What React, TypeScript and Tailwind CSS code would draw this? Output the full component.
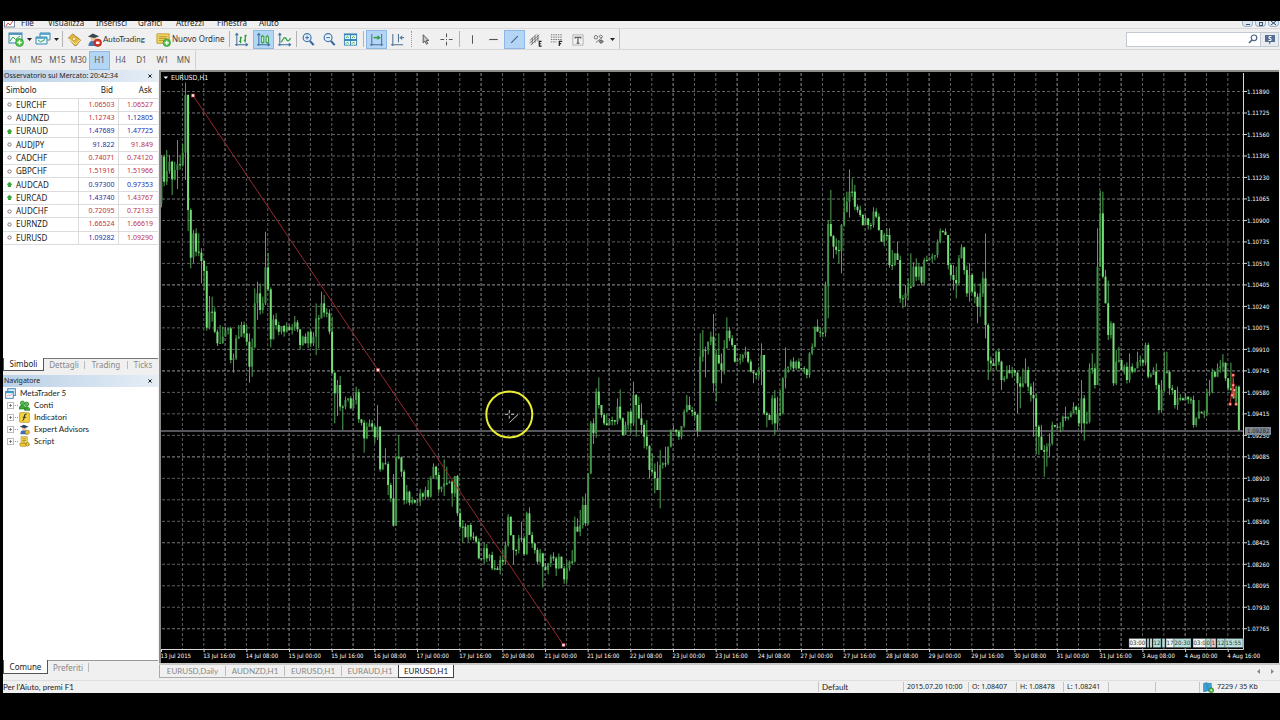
import React from "react";

/* ---------- price data ---------- */

type Bar = [close: number, high?: number, low?: number];
type Block = { base: number; bars: Bar[] };

/* Bars are stored in thirds of a chart unit below each block's base line. */
const blocks: Block[] = [
  {
    base: 70,
    bars: [
      [260, 255, 412], [335], [303, 240, 345], [275, 255], [328, 272, 375], [300, 275], [283, 210, 357], [285, 255],
      [248, 222, 290], [75, 38, 330], [420, 72, 483], [563, 415, 595], [490, 480, 580], [545, 475], [548, 490],
      [573, 535, 640], [603, 570, 660], [773, 588, 782], [725, 678, 778], [725, 680, 755], [785, 712, 790], [820],
      [819, 765, 822], [800, 770], [780], [775], [870, 770, 880], [865, 850, 908], [805, 795, 870], [800, 765],
      [765, 755], [790, 755], [815, 765], [890, 790, 938], [832, 805, 920], [700, 655], [670, 635, 750], [720, 640],
      [700, 680, 730], [592, 485, 705], [658, 548], [808, 652, 832], [748], [765, 730], [785], [768], [785, 765, 800],
      [770], [780], [772], [757, 738], [778], [825, 778, 840], [800], [820], [785], [820], [800], [745, 700, 855],
      [745, 735, 835], [700, 665], [728, 675], [730], [785, 718], [908, 740, 912],
    ],
  },
  {
    base: 350,
    bars: [
      [130, 70, 220], [105, 90, 198], [170, 78], [170, 165, 240], [150], [145], [175], [150], [127, 110], [208], [218],
      [265, 210, 308], [230], [220, 208], [230], [262, 225, 280], [230, 165], [358, 228, 365], [340], [342, 295],
      [405, 335, 435], [445], [527, 372, 530], [322, 318, 525], [322, 255], [365, 320, 380], [450], [425, 405], [458],
      [450], [458], [455], [430], [440], [420], [440, 390, 445], [385], [350, 340], [375], [418], [410], [400, 328, 438],
      [400, 350], [395], [430, 390, 470], [378], [490, 375], [530], [530, 510, 578], [562], [525], [560], [560], [575],
      [625], [628], [595, 578], [625], [615], [655], [655, 630], [660], [630], [635, 600], [585], [500, 492],
      [555, 500], [600, 565, 643], [600], [565], [565, 515], [612], [490, 485], [555, 472], [580], [600], [635], [610],
      [650, 608, 712], [660], [640], [620], [625], [655, 620, 678], [620], [655], [688], [655, 630, 700], [635],
      [635, 600], [530, 500], [545, 505], [525, 480], [465, 440], [520, 430], [370], [220], [250, 205, 282], [125, 115],
    ],
  },
  {
    base: 290,
    bars: [
      [345, 262], [375], [400, 370], [405, 370], [390], [390], [395], [350, 325], [385, 298], [435], [405], [365],
      [400, 360, 430], [315, 275], [345, 312, 440], [385, 320], [405, 340, 430], [440, 400, 475], [468, 390], [540, 465, 565],
      [545, 490], [565, 520, 610], [600, 515], [525, 480, 655], [520], [520, 470], [470], [425], [420], [425], [440, 420, 450],
      [408], [365], [345, 315], [360, 320], [365], [375], [422, 372, 440], [200, 130, 425], [180, 120, 215],
      [180, 170, 262], [155], [140, 125], [280, 72, 305], [195, 180, 335], [220, 130], [240, 190, 280], [175, 150],
      [122, 82, 175], [145, 112], [165], [215], [210], [205], [195], [185, 170], [215], [245], [250, 240, 280], [255],
      [240], [195, 160, 285], [370, 195], [375, 365, 412], [390], [325, 315], [400, 300, 435], [370, 320, 420], [370, 300],
      [265], [235, 172, 295], [230], [215], [235], [215], [235], [235], [238], [255, 235, 265], [190], [170], [110],
      [125, 88], [128], [128],
    ],
  },
  {
    base: 150,
    bars: [
      [405, 395, 560], [222, 210, 505], [258, 120], [290, 255, 325], [300, 265], [303, 270, 340], [225, 222, 370],
      [185, 140], [155, 125], [125, 58, 203], [125, 85], [170, 105], [180], [195], [225], [205], [225], [225], [185],
      [200, 175], [240], [275], [255], [255, 235], [345, 235], [345, 300, 360], [310], [330, 275], [445], [445, 435, 475],
      [430, 405, 470], [410, 385, 450], [410, 310], [350], [380, 325], [350], [398], [330], [330], [325], [320], [315],
      [275], [243, 235], [245], [255], [345], [375], [390, 345, 420], [400, 350, 445], [325], [292, 283], [360, 290],
      [430], [375, 340, 455], [425, 370], [440, 400, 460], [470, 430, 520], [430, 400, 500], [385, 365], [525, 250, 565],
      [632, 520, 690], [640, 620, 665], [648], [605], [635], [690, 632, 720], [685], [660], [670, 645], [660], [668],
      [700, 665, 790], [710, 680, 775], [700, 655], [660, 625], [710, 650], [735, 700, 755], [745, 695, 860],
      [830, 730, 912], [860, 825, 915], [900, 825], [905, 885, 980], [890, 880, 950], [880, 850, 920], [825], [830],
      [832], [830], [800], [805, 770], [800], [790], [770], [780], [820], [745, 690, 850], [820, 735, 872], [815, 785],
      [655, 640, 820], [655, 610], [705, 640],
    ],
  },
  {
    base: 70,
    bars: [
      [590, 475, 945], [430, 362, 590], [620, 365, 625], [700, 600], [795, 632, 810], [760], [940, 758], [875, 840],
      [870, 830], [900], [890], [930], [890, 850], [905], [895], [875, 845], [870], [878], [825, 818], [920, 818],
      [915], [905], [945, 880], [1020, 940, 1030], [960, 930], [905, 845], [905, 845], [955, 905, 975], [960], [1005],
      [985, 950, 1020], [985], [990], [980], [988], [990], [1065], [1045], [1025, 990], [1030], [1028], [970], [965, 930],
      [905], [920], [895, 880], [890, 870], [878, 852], [925, 880], [955], [960, 878], [985, 925], [950], [1080, 946, 1083],
    ],
  },
];

type Candle = { x: number; top: number; bottom: number; high: number; low: number; up: boolean };

const candles: Candle[] = [];
{
  let prev = 70 + 400 / 3;
  let i = 0;
  for (const block of blocks) {
    for (const [c, h, l] of block.bars) {
      const close = block.base + c / 3;
      const top = Math.min(prev, close);
      const bottom = Math.max(prev, close, top + 1);
      const high = h === undefined ? top - ((i * 7) % 5) * 1.1 : Math.min(top, block.base + h / 3);
      const low = l === undefined ? bottom + ((i * 11) % 6) * 0.9 : Math.max(bottom, block.base + l / 3);
      candles.push({ x: 161.4 + i * 2.667, top, bottom, high, low, up: close < prev });
      prev = close;
      i++;
    }
  }
}

const dates = [
  "13 Jul 2015", "13 Jul 16:00", "14 Jul 08:00", "15 Jul 00:00", "15 Jul 16:00", "16 Jul 08:00", "17 Jul 00:00",
  "17 Jul 16:00", "20 Jul 08:00", "21 Jul 00:00", "21 Jul 16:00", "22 Jul 08:00", "23 Jul 00:00", "23 Jul 16:00",
  "24 Jul 08:00", "27 Jul 00:00", "27 Jul 16:00", "28 Jul 08:00", "29 Jul 00:00", "29 Jul 16:00", "30 Jul 08:00",
  "31 Jul 00:00", "31 Jul 16:00", "3 Aug 08:00", "4 Aug 00:00", "4 Aug 16:00",
];
const columns = Array.from({ length: 50 }, (_, k) => 182.4 + k * 21.335);
const levels = Array.from({ length: 26 }, (_, k) => ({ y: 91.5 + k * 21.49, label: (1.1189 - k * 0.00165).toFixed(5) }));

const events: { x: number; w: number; t: string; fill: string }[] = [
  { x: 1129, w: 17, t: "03:00", fill: "#f4f4f4" },
  { x: 1147, w: 2, t: "", fill: "#b9dedb" },
  { x: 1150, w: 2, t: "", fill: "#f4f4f4" },
  { x: 1153, w: 8, t: "12", fill: "#b9dedb" },
  { x: 1162, w: 3, t: "", fill: "#b9dedb" },
  { x: 1166, w: 8, t: "17", fill: "#f4f4f4" },
  { x: 1174, w: 17, t: "20:30", fill: "#b9dedb" },
  { x: 1193, w: 13, t: "03:0", fill: "#f4f4f4" },
  { x: 1206, w: 5, t: "0", fill: "#b9dedb" },
  { x: 1211, w: 5, t: "1", fill: "#f0c4c8" },
  { x: 1217, w: 8, t: "12", fill: "#b9dedb" },
  { x: 1225, w: 18, t: "15:55", fill: "#b9dedb" },
];

const marks: [number, number][] = [[1233, 375], [1233, 385], [1234, 390], [1232, 395], [1230, 404], [1236, 404]];

function Chart() {
  return (
    <svg
      viewBox="161 72 1118 590"
      preserveAspectRatio="xMinYMin meet"
      className="block h-full w-full font-['DejaVu_Sans_Condensed','Noto_Sans',sans-serif] text-[6px]"
      role="img"
      aria-label="EURUSD,H1"
    >
      <g stroke="#8b8d90" strokeWidth="1" strokeDasharray="3 2" opacity="0.85">
        {columns.map((x, k) => <line key={k} x1={x} x2={x} y1="73" y2="649" strokeWidth={k % 3 === 2 ? 1.2 : 0.8} />)}
        {levels.map((l, k) => <line key={k} x1="162" x2="1243" y1={l.y} y2={l.y} strokeWidth={k % 4 === 1 ? 1.1 : 0.8} />)}
      </g>
      <rect x="161" y="430" width="1083" height="2" fill="#55555b" />
      {candles.map((c, k) => (
        <g key={k} fill={c.up ? "#419247" : "#76dd78"}>
          <rect x={c.x - 0.4} y={c.high} width="0.9" height={c.low - c.high} fill="#58b45c" />
          <rect x={c.x - 1} y={c.top} width="2" height={c.bottom - c.top} />
        </g>
      ))}
      <path d="M193 95.5 378 370 563.5 645" stroke="#98282d" strokeWidth="1" fill="none" />
      {[[193, 95.5], [378, 370], [563.5, 645]].map(([x, y]) => (
        <rect key={x} x={x - 1.5} y={y - 1.5} width="3" height="3" fill="#ffe9e9" stroke="#b33" strokeWidth="0.6" />
      ))}
      <path d="M1233 375V385L1236 404M1233 385 1230 404M1234 390 1232 395" stroke="#c33b2b" strokeWidth="1" fill="none" />
      {marks.map(([x, y]) => (
        <rect key={`${x}-${y}`} x={x - 1} y={y - 1} width="2.2" height="2.2" fill="#fff" stroke="#d22" strokeWidth="0.8" />
      ))}
      <path d="M161 649.5H1243.5V73" stroke="#d8d8d8" strokeWidth="1" fill="none" />
      {dates.map((d, k) => (
        <g key={k}>
          <path d={`M${161.5 + k * 42.67} 649v3`} stroke="#d8d8d8" />
          <text x={160.5 + k * 42.67} y="657.6" fill="#fff">{d}</text>
        </g>
      ))}
      {levels.map((l) => (
        <g key={l.label}>
          <path d={`M1244 ${l.y}h3`} stroke="#d8d8d8" />
          <text x="1247" y={l.y + 2.3} fill="#fff">{l.label}</text>
        </g>
      ))}
      <rect x="1245" y="427" width="26" height="8" fill="#7f8994" />
      <text x="1247" y="433.2" fill="#20262c">1.09282</text>
      {events.map((e) => (
        <g key={e.x}>
          <rect x={e.x} y="638.5" width={e.w} height="9" fill={e.fill} stroke="#3c4c4c" strokeWidth="0.5" />
          <text x={e.x + 0.6} y="645.4" fill="#1d3432">{e.t}</text>
        </g>
      ))}
      <path d="M163.5 76.5h4.6l-2.3 2.6z" fill="#fff" />
      <text x="171" y="80" fill="#f2f2f2" className="text-[7px]">EURUSD,H1</text>
      <circle cx="509.3" cy="414.5" r="23" fill="none" stroke="#e9ee33" strokeWidth="2" />
      <path d="M505 414.3h3M511 414.3h3M509.3 410v3M509.3 415.6v3M509.5 422.5 518 414.5" stroke="#ddd" strokeWidth="0.9" fill="none" />
    </svg>
  );
}

/* ---------- icons ---------- */

function Ico({ children, w = 15 }: { children: React.ReactNode; w?: number }) {
  return (
    <svg viewBox="0 0 16 16" width={w} height={w} fill="none" className="shrink-0" aria-hidden="true">
      {children}
    </svg>
  );
}

const Plus = () => (
  <g>
    <circle cx="11.5" cy="11.5" r="4" fill="#4cc046" stroke="#2f8f35" strokeWidth="0.6" />
    <path d="M11.5 9.2v4.6M9.2 11.5h4.6" stroke="#fff" strokeWidth="1.4" />
  </g>
);

const Axes = () => (
  <path d="M3 2v13M1 13.500h13M12.500 12l2 1.500-2 1.500M1.500 3.500 3 1.500l1.500 2" stroke="#3f6f9f" strokeWidth="1.100" />
);

const icons = {
  newChart: <Ico w={16}><rect x="1" y="2" width="13" height="10" fill="#eefaf3" stroke="#3b84b4" /><path d="M1 3h13" stroke="#3b84b4" strokeWidth="1.600" /><path d="M2 10 5 6l2.500 2.500L12 5" stroke="#35a04c" /><Plus /></Ico>,
  profiles: <Ico w={16}><path d="M5 2h10v7H5z" fill="#eefaf3" stroke="#3b84b4" /><path d="M1 6h11v7H1z" fill="#e6f6fb" stroke="#3b84b4" /><path d="M1 7h11M5 3h10" stroke="#3b9cc4" strokeWidth="1.400" /><path d="m3 9 2.500 2L10 8.500" stroke="#35a04c" /></Ico>,
  book: <Ico><path d="M1.500 6.500 6 2l8.500 6.500L10 14.500H8z" fill="#e2b63b" stroke="#9b731d" strokeWidth="0.800" /><path d="m2 7.500 7 5.500 5-4.500" stroke="#fff0bb" /><circle cx="7.500" cy="7.500" r="1.800" fill="#fff2c5" stroke="#b58a24" strokeWidth=".6" /></Ico>,
  auto: <Ico><path d="M1.500 15c0-4 2-6 5.500-6s5.500 2 5.500 6z" fill="#4a79b0" /><circle cx="7" cy="6.500" r="3" fill="#e9c796" /><path d="M1 5 6 1.500 13 4.500 8 6.500z" fill="#3b4654" /><circle cx="11.500" cy="11.500" r="4" fill="#d9362a" stroke="#9d1a12" strokeWidth="0.600" /><rect x="9.700" y="10.200" width="3.600" height="2.600" fill="#fff" /></Ico>,
  order: <Ico><path d="M1 2h13v10H1z" fill="#f2d768" stroke="#c19b2c" /><path d="M3 5h9M3 7h9M3 9h6" stroke="#a8821b" strokeWidth="0.800" /><Plus /></Ico>,
  bars: <Ico><Axes /><path d="M7 5v7M5.500 10H7M7 6h1.500M12 3v8M10.500 9H12M12 4h1.500" stroke="#2f9c3c" strokeWidth="1.400" /></Ico>,
  candle: <Ico><Axes /><path d="M7 3v9.500M12 3v9.500" stroke="#2f9c3c" /><rect x="5.700" y="4.500" width="2.600" height="6.500" fill="#c9f4c6" stroke="#2f9c3c" /><rect x="10.700" y="5" width="2.600" height="6" fill="#c9f4c6" stroke="#2f9c3c" /></Ico>,
  line: <Ico><Axes /><path d="M4 10.500c2 0 2.500-5 4.500-4.500s1.500 3.500 3 3.500 2-1.500 3-3" stroke="#2f9c3c" strokeWidth="1.300" /></Ico>,
  zoomIn: <Ico><circle cx="6.500" cy="6" r="4.200" fill="#e6f1fb" stroke="#4477ae" strokeWidth="1.300" /><path d="M4.500 6h4M6.500 4v4" stroke="#2f66a6" /><path d="m9.500 9.500 4 4.500" stroke="#2f66a6" strokeWidth="2.200" /></Ico>,
  zoomOut: <Ico><circle cx="6.500" cy="6" r="4.200" fill="#e6f1fb" stroke="#4477ae" strokeWidth="1.300" /><path d="M4.500 6h4" stroke="#2f66a6" /><path d="m9.500 9.500 4 4.500" stroke="#2f66a6" strokeWidth="2.200" /></Ico>,
  tile: <Ico><rect x="1" y="1.500" width="14" height="13" fill="#3a86bd" /><path d="M2 3.500h5.500v4H2zM8.500 3.500H14v4H8.500zM2 9.500h5.500v4H2zM8.500 9.500H14v4H8.500z" fill="#eaf9ec" /><path d="m3 6.500 1.500-1.500L6 6M9.500 6.500 11 5l1.500 1M3 12.500 4.500 11 6 12M9.500 12.500 11 11l1.500 1" stroke="#2f9c3c" /></Ico>,
  scroll: <Ico><path d="M3 2v13M1 13.500h14M13.500 2v13" stroke="#4d6f94" strokeWidth="1.100" /><path d="M5 6h5" stroke="#2f9c3c" strokeWidth="1.600" /><path d="m9 3.500 3.500 2.500L9 8.500z" fill="#2f9c3c" /></Ico>,
  shift: <Ico><path d="M3 2v13M1 13.500h13M9 2v9" stroke="#4d6f94" strokeWidth="1.100" /><path d="M15 6h-3" stroke="#35608c" /><path d="m13 3.500-3 2.500 3 2.500z" fill="#4d7fb4" /></Ico>,
  cursor: <Ico><path d="M5.500 3v8.500l2-1.800 1.500 3.300 1.500-.8-1.600-3 2.600-.3z" fill="#c8c8c8" stroke="#444" strokeWidth="0.900" /></Ico>,
  cross: <Ico><path d="M8 1.500v4M8 10.500v4M1.500 8h4M10.500 8h4" stroke="#555" strokeWidth="1.100" /><path d="M7.500 8h1" stroke="#444" /></Ico>,
  vline: <Ico><path d="M8 3.500v9" stroke="#555" strokeWidth="1.100" /></Ico>,
  hline: <Ico><path d="M3.500 8h9" stroke="#555" strokeWidth="1.200" /></Ico>,
  trend: <Ico><path d="m4.500 11.500 7-7" stroke="#4b6078" strokeWidth="1.200" /></Ico>,
  channel: <Ico><path d="m2 9 7-6.500M3 14l9-8.500M1.500 12 12 3M4.500 6v7M7.500 4.500v7M10.500 3v7" stroke="#666" strokeWidth=".9" /><path d="M14.500 10H12v5h2.500M12 12.500h2" stroke="#222" strokeWidth="1.200" /></Ico>,
  fibo: <Ico><path d="M2 3h12M2 5.500h12M2 8h12M2 10.500h6" stroke="#666" strokeDasharray="1.500 1" /><path d="M11 15v-5h3M11 12.500h2" stroke="#222" strokeWidth="1.300" /></Ico>,
  text: <Ico><rect x="3" y="3" width="11" height="11" stroke="#777" strokeDasharray="1 1" /><path d="M5.500 5.500h6M8.500 5.500V12M7 12h3M5.500 5v2M11.500 5v2" stroke="#444" strokeWidth="1.100" /></Ico>,
  shapes: <Ico w={14}><circle cx="4.500" cy="6" r="2" stroke="#666" /><path d="m8 5 2-1.500L12 5l-2 2zM4.500 12 12 6" stroke="#666" /><path d="M8 10.500 11 9l2 2-3 2z" fill="#888" stroke="#555" /></Ico>,
};

/* ---------- toolbar ---------- */

const Sep = ({ wide = false }: { wide?: boolean }) => (
  <span className={wide ? "mx-0.5 h-4 w-px shrink-0 bg-[#b4b4b4]" : "mx-px h-4 w-px shrink-0 bg-[#b4b4b4]"} />
);

function Tool({ icon, label, on = false }: { icon: React.ReactNode; label: string; on?: boolean }) {
  return (
    <button
      aria-label={label}
      className={
        on
          ? "flex h-[19px] w-[21px] shrink-0 items-center justify-center border border-[#8db8e4] bg-[#b4d6f6]"
          : "flex h-[19px] w-[21px] shrink-0 items-center justify-center"
      }
    >
      {icon}
    </button>
  );
}

function Drop({ label }: { label: string }) {
  return (
    <button aria-label={label} className="flex h-4 w-1.5 shrink-0 items-center justify-center">
      <svg width="5" height="3" viewBox="0 0 5 3"><path d="M0 0h5L2.500 3z" fill="#222" /></svg>
    </button>
  );
}

function Toolbar() {
  return (
    <div className="flex h-[22px] shrink-0 items-center border-y border-[#d8d8d8]">
      <div className="flex h-full items-center">
        <div className="flex w-[58px] items-center pl-[2px]">
          <Tool icon={icons.newChart} label="Nuovo grafico" />
          <Drop label="Elenco grafici" />
          <Tool icon={icons.profiles} label="Profili" />
          <Drop label="Elenco profili" />
        </div>
        <Sep />
        <Tool icon={icons.book} label="Simboli" />
        <button className="flex w-[67px] shrink-0 items-center gap-px whitespace-nowrap pl-0.5 font-['Lato','Noto_Sans',sans-serif]">{icons.auto}AutoTrading</button>
        <button className="flex w-[72px] shrink-0 items-center gap-px whitespace-nowrap pl-1">{icons.order}Nuovo Ordine</button>
        <span className="w-1" />
        <Sep />
        <Tool icon={icons.bars} label="Barre" />
        <span className="w-px" />
        <Tool icon={icons.candle} label="Candele" on />
        <Tool icon={icons.line} label="Linea" />
        <Sep />
        <Tool icon={icons.zoomIn} label="Ingrandisci" />
        <Tool icon={icons.zoomOut} label="Riduci" />
        <Tool icon={icons.tile} label="Affianca" />
        <Sep wide />
        <Tool icon={icons.scroll} label="Scorrimento" on />
        <Tool icon={icons.shift} label="Spostamento" />
      </div>
      <span className="ml-[3px] mr-[3px] h-4 border-l border-dotted border-[#999]" />
      <div className="flex h-full items-center border-r border-[#c4c4c4]">
        <Tool icon={icons.cursor} label="Cursore" />
        <Tool icon={icons.cross} label="Mirino" />
        <Sep wide />
        <Tool icon={icons.vline} label="Linea verticale" />
        <Tool icon={icons.hline} label="Linea orizzontale" />
        <Tool icon={icons.trend} label="Linea di tendenza" on />
        <Tool icon={icons.channel} label="Canale" />
        <Tool icon={icons.fibo} label="Fibonacci" />
        <Tool icon={icons.text} label="Testo" />
        <Tool icon={icons.shapes} label="Oggetti" />
        <Drop label="Elenco oggetti" />
        <span className="w-1" />
      </div>
      <div className="ml-auto mr-px flex h-[15px] items-center border border-[#c2c8d0] bg-white">
        <input aria-label="Cerca" className="h-full w-[118px] bg-white px-1 outline-none" />
        <button aria-label="Avvia ricerca" className="flex w-[15px] items-center justify-center">
          <svg width="10" height="10" viewBox="0 0 10 10" fill="none"><circle cx="6" cy="3.800" r="2.800" stroke="#4a6286" strokeWidth="1.200" /><path d="M4 6 1 9" stroke="#4a6286" strokeWidth="1.600" /></svg>
        </button>
        <button aria-label="Messaggi" className="flex h-full w-[18px] items-center justify-center border-l border-[#c2c8d0] bg-[#e8ebef]">
          <svg width="12" height="11" viewBox="0 0 12 11"><path d="M1 1h10v7H7l-2 2.500V8H1z" fill="#556c94" /><path d="M7.500 2.500H5v2h2v2H4.500" stroke="#fff" fill="none" /></svg>
        </button>
      </div>
    </div>
  );
}

/* ---------- left panels ---------- */

type Quote = [symbol: string, bid: string, ask: string, bidUp: boolean, askUp: boolean, up?: boolean];
const quotes: Quote[] = [
  ["EURCHF", "1.06503", "1.06527", false, false],
  ["AUDNZD", "1.12743", "1.12805", false, true],
  ["EURAUD", "1.47689", "1.47725", true, true, true],
  ["AUDJPY", "91.822", "91.849", true, false],
  ["CADCHF", "0.74071", "0.74120", false, false],
  ["GBPCHF", "1.51916", "1.51966", false, false],
  ["AUDCAD", "0.97300", "0.97353", true, true, true],
  ["EURCAD", "1.43740", "1.43767", true, false, true],
  ["AUDCHF", "0.72095", "0.72133", false, false],
  ["EURNZD", "1.66524", "1.66619", false, false],
  ["EURUSD", "1.09282", "1.09290", true, false],
];

function PanelTitle({ children }: { children: React.ReactNode }) {
  return (
    <div className="flex h-3 shrink-0 items-center justify-between bg-gradient-to-r from-[#b9d0e6] to-[#e6eef6] pl-px pr-1 text-[#222]">
      <h2 className="whitespace-nowrap text-[7px]">{children}</h2>
      <button aria-label="Chiudi" className="flex h-2 w-2 items-center justify-center">
        <svg width="4" height="4" viewBox="0 0 5 5"><path d="m.5.500 4 4M4.500.500l-4 4" stroke="#111" strokeWidth="1.200" /></svg>
      </button>
    </div>
  );
}

function MarketWatch() {
  return (
    <section className="flex h-[301px] shrink-0 flex-col bg-white">
      <PanelTitle>Osservatorio sul Mercato: 20:42:34</PanelTitle>
      <table className="h-[163px] w-full table-fixed border-collapse">
        <thead>
          <tr className="h-4 text-[#222]">
            <th className="w-[75px] pl-[3px] text-left font-normal">Simbolo</th>
            <th className="pr-[5px] text-right font-normal">Bid</th>
            <th className="pr-1.5 text-right font-normal">Ask</th>
          </tr>
        </thead>
        <tbody>
          {quotes.map(([s, bid, ask, bu, au, up]) => (
            <tr key={s} className="border-y border-[#dcdcdc]">
              <td className="p-0 pl-1 text-[#222]">
                <span className="flex items-center gap-1">
                  <svg width="5" height="5" viewBox="0 0 6 6" className="shrink-0">
                    {up ? <path d="M3 0 6 3H4.500v3h-3V3H0z" fill="#2cab2c" stroke="#16801a" strokeWidth="0.5" /> : <circle cx="3" cy="3" r="2" fill="#fff" stroke="#8a6f6f" strokeWidth="1.200" />}
                  </svg>
                  {s}
                </span>
              </td>
              <td className={bu ? "border-x border-[#dcdcdc] p-0 pr-[3px] text-right text-[7px] text-[#2a2aa6]" : "border-x border-[#dcdcdc] p-0 pr-[3px] text-right text-[7px] text-[#bf2f3c]"}>{bid}</td>
              <td className={au ? "p-0 pr-[5px] text-right text-[7px] text-[#2a2aa6]" : "p-0 pr-[5px] text-right text-[7px] text-[#bf2f3c]"}>{ask}</td>
            </tr>
          ))}
        </tbody>
      </table>
      <div className="mt-auto flex h-[13px] shrink-0 border-t border-[#777] bg-[#f0f0f0] text-[#888]">
        <button className="-mt-px h-[13px] w-[41px] border-x border-b border-[#555] bg-white text-[#222]">Simboli</button>
        <button className="my-0.5 w-[41px] border-r border-[#bbb] leading-none">Dettagli</button>
        <button className="my-0.5 w-[43px] border-r border-[#bbb] leading-none">Trading</button>
        <button className="my-0.5 w-[30px] leading-none">Ticks</button>
      </div>
    </section>
  );
}

const treeIcons = {
  root: <Ico w={11}><rect x="4" y="1" width="11" height="10" fill="#dff1fb" stroke="#3b84b4" strokeWidth="1.400" /><rect x="1" y="5" width="11" height="10" fill="#fff" stroke="#3b84b4" strokeWidth="1.400" /><path d="M1 6.500h11" stroke="#3b9cc4" strokeWidth="2" /><path d="m3 12 2-2 2 1.500 3-3" stroke="#d2554b" /></Ico>,
  accounts: <Ico w={11}><circle cx="5" cy="4.500" r="3" fill="#58c24a" stroke="#217f2a" /><circle cx="11" cy="6" r="3" fill="#58c24a" stroke="#217f2a" /><path d="M0 13c0-7 9-7 10 0zM8 15c0-7 7-7 8 0z" fill="#3fa836" stroke="#217f2a" /></Ico>,
  indicators: <Ico w={11}><rect x="1" y="1" width="14" height="14" rx="1" fill="#f5d542" stroke="#ad8615" /><path d="M11 3.500C8 3 8 5 7.500 8S7 12.500 5 12.500M5.500 7.500h5" stroke="#333" strokeWidth="1.500" /></Ico>,
  experts: <Ico w={11}><path d="M2 15c0-5 2-6 5-6s6 1 6 6z" fill="#3e6fa8" /><circle cx="7.500" cy="6.500" r="3" fill="#e9c796" /><path d="M1 4 7 1l7 3-6 2z" fill="#26435f" /><circle cx="12" cy="12" r="3" fill="#e9c33c" stroke="#8d6b14" /></Ico>,
  script: <Ico w={11}><path d="M3 1h9v11H3z" fill="#f7dc62" stroke="#b18c1c" /><path d="M5 4h5M5 6.500h5M5 9h4" stroke="#8d6b14" /><path d="M1 11h9v4H2z" fill="#f3cb3c" stroke="#b18c1c" /><circle cx="12.500" cy="12" r="2.500" fill="#f3cb3c" stroke="#8d6b14" /></Ico>,
};

function TreeItem({ icon, children }: { icon: React.ReactNode; children: React.ReactNode }) {
  return (
    <li className="flex h-3 items-center gap-1 pl-1">
      <span className="flex items-center gap-px">
        <button aria-label="Espandi" className="flex">
          <svg width="7" height="7" viewBox="0 0 7 7" fill="none"><rect x=".5" y=".5" width="6" height="6" fill="#fff" stroke="#bbb" /><path d="M2 3.500h3M3.500 2v3" stroke="#666" strokeWidth=".8" /></svg>
        </button>
        <span className="w-[3px] border-t border-dotted border-[#999]" />
        {icon}
      </span>
      {children}
    </li>
  );
}

function Navigator() {
  return (
    <section className="mt-1 flex min-h-0 flex-1 flex-col bg-white">
      <PanelTitle>Navigatore</PanelTitle>
      <div className="font-['Lato','Noto_Sans',sans-serif] text-[#222]">
        <div className="flex h-3 items-center gap-1 pl-0.5">{treeIcons.root}MetaTrader 5</div>
        <ul>
          <TreeItem icon={treeIcons.accounts}>Conti</TreeItem>
          <TreeItem icon={treeIcons.indicators}>Indicatori</TreeItem>
          <TreeItem icon={treeIcons.experts}>Expert Advisors</TreeItem>
          <TreeItem icon={treeIcons.script}>Script</TreeItem>
        </ul>
      </div>
      <div className="mt-auto flex h-[14px] shrink-0 border-t border-[#999] bg-[#f0f0f0] text-[#888]">
        <button className="-mt-px h-[14px] w-[45px] border-x border-b border-[#555] bg-white text-[#222]">Comune</button>
        <button className="my-0.5 w-[41px] border-r border-[#bbb] leading-none">Preferiti</button>
      </div>
    </section>
  );
}

/* ---------- page ---------- */

const menus = [
  ["File", "w-[27px]"], ["Visualizza", "w-12"], ["Inserisci", "w-[42px]"], ["Grafici", "w-[38px]"],
  ["Attrezzi", "w-[41px]"], ["Finestra", "w-[42px]"], ["Aiuto", "w-8"],
];
const frames = ["M1", "M5", "M15", "M30", "H1", "H4", "D1", "W1", "MN"];

export default function App() {
  return (
    <div className="flex h-screen min-h-[480px] flex-col overflow-hidden bg-black pb-[27px] pl-[3px] pt-[21px] font-['Noto_Sans','Open_Sans',sans-serif] text-[8px] leading-[10px] text-[#333]">
      <div className="flex min-h-0 flex-1 flex-col bg-[#f0f0f0]">
        <header className="flex h-[7px] shrink-0 items-end overflow-hidden">
          <svg width="11" height="7" viewBox="0 0 11 7" className="ml-px mr-[6px]"><rect x=".5" y="-3" width="10" height="9" fill="#fff" stroke="#7a8ba0" /><path d="m2 5 2-3 2 2 3-4" stroke="#c44" fill="none" /></svg>
          <nav className="flex h-[10px] items-center text-[#222]">
            {menus.map(([m, w]) => <button key={m} className={`${w} text-left`}>{m}</button>)}
          </nav>
          <div className="ml-auto mr-px flex gap-0.5 self-start">
            <button aria-label="Riduci a icona" className="h-[6px] w-[11px] rounded-b-sm border border-t-0 border-[#9db2ca] bg-[#dce8f4]"><span className="mx-auto mt-0.5 block h-px w-1 bg-[#456]" /></button>
            <button aria-label="Ripristina" className="h-[6px] w-[11px] rounded-b-sm border border-t-0 border-[#9db2ca] bg-[#dce8f4]"><span className="mx-auto block h-1 w-1 border border-[#456]" /></button>
            <button aria-label="Chiudi finestra" className="flex h-[6px] w-[11px] items-start justify-center rounded-b-sm border border-t-0 border-[#9db2ca] bg-[#dce8f4]"><svg width="5" height="4" viewBox="0 0 5 4"><path d="m0 0 5 4M5 0 0 4" stroke="#345" /></svg></button>
          </div>
        </header>
        <Toolbar />
        <div className="flex h-5 shrink-0">
          <div className="flex items-center border-r border-[#d0d0d0] pl-[2px] pr-[1px] text-[#555]">
            {frames.map((f) => (
              <button key={f} className={f === "H1" ? "h-[19px] w-[21px] border border-[#8db8e4] bg-[#b4d6f6]" : "h-[19px] w-[21px]"}>{f}</button>
            ))}
          </div>
        </div>
        <main className="flex min-h-0 flex-1">
          <aside className="flex w-[155px] shrink-0 flex-col pb-[6px]">
            <MarketWatch />
            <Navigator />
          </aside>
          <section className="ml-px flex min-w-0 flex-1 flex-col">
            <div className="mr-px min-h-0 flex-1 border-l-2 border-t-2 border-[#8a8c88] bg-black">
              <Chart />
            </div>
            <div className="flex h-[17px] shrink-0 items-start border-t-2 border-[#c8c8c8] text-[#888]">
              <div className="flex h-[13px] items-center whitespace-nowrap border-b border-l border-[#aaa] font-['Lato','Noto_Sans',sans-serif]">
                <button className="w-[66px] border-r border-[#bbb]">EURUSD,Daily</button>
                <button className="w-[59px] border-r border-[#bbb]">AUDNZD,H1</button>
                <button className="w-[57px] border-r border-[#bbb]">EURUSD,H1</button>
                <button className="w-[56px]">EURAUD,H1</button>
                <button className="h-[13px] w-[56px] border border-t-0 border-[#444] bg-white text-[#222]">EURUSD,H1</button>
              </div>
              <div className="ml-auto mr-[6px] flex h-3 items-center gap-[11px]">
                <button aria-label="Scorri a sinistra"><svg width="3" height="5" viewBox="0 0 3 5"><path d="M3 0v5L0 2.500z" fill="#888" /></svg></button>
                <button aria-label="Scorri a destra"><svg width="3" height="5" viewBox="0 0 3 5"><path d="M0 0v5l3-2.500z" fill="#888" /></svg></button>
              </div>
            </div>
          </section>
        </main>
        <footer className="flex h-[13px] shrink-0 items-center border-t border-[#dedede] text-[#222]">
          <span className="flex-1 font-['Lato','Noto_Sans',sans-serif]">Per l'Aiuto, premi F1</span>
          <span className="w-[85px] border-l border-[#c4c4c4] pl-[3px] font-['Lato','Noto_Sans',sans-serif]">Default</span>
          <div className="flex text-[7px]">
            <span className="w-[65px] whitespace-nowrap border-l border-[#c4c4c4] pl-[3px]">2015.07.20 10:00</span>
            <span className="w-12 whitespace-nowrap border-l border-[#c4c4c4] pl-[3px]">O: 1.08407</span>
            <span className="w-[47px] whitespace-nowrap border-l border-[#c4c4c4] pl-[3px]">H: 1.08478</span>
            <span className="w-[45px] whitespace-nowrap border-l border-[#c4c4c4] pl-[3px]">L: 1.08241</span>
          </div>
          <span className="h-[10px] w-[47px] border-l border-[#c4c4c4]" />
          <span className="h-[10px] w-11 border-l border-[#c4c4c4]" />
          <span className="flex w-[81px] items-center gap-[3px] whitespace-nowrap border-l border-[#c4c4c4] pl-[3px] text-[7px]">
            <Ico w={11}><path d="M1 2 6 1v12l-5 1zM7 2h5v11H7z" fill="#3fa4d8" stroke="#1e6fa0" /><circle cx="12" cy="12" r="3.500" fill="#55b83c" stroke="#217f2a" /><path d="M12 10.500v3M10.500 12h3" stroke="#fff" /></Ico>
            7229 / 35 Kb
          </span>
        </footer>
      </div>
    </div>
  );
}
